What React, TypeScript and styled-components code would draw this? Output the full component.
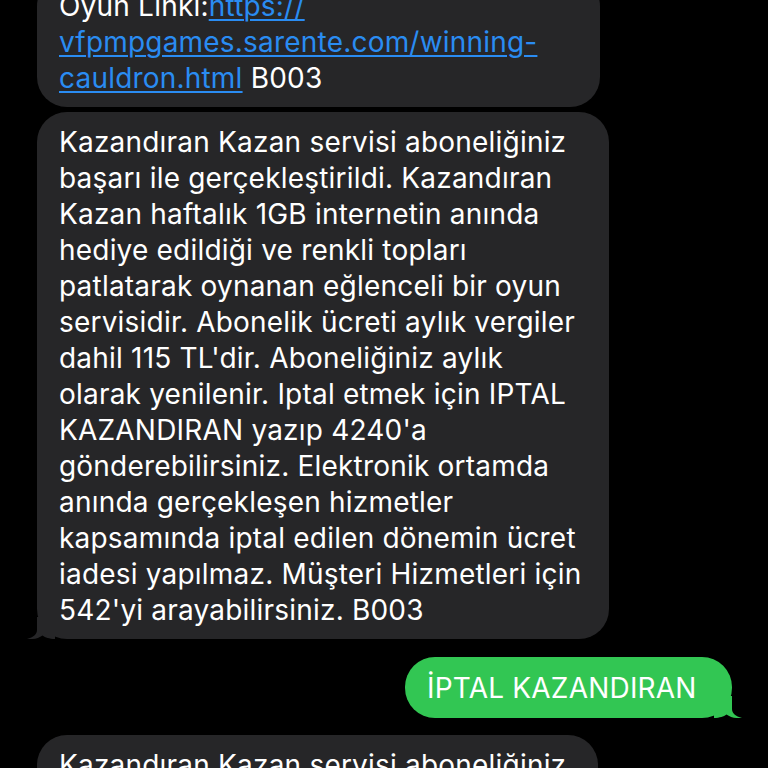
import React from 'react'
import styled, { createGlobalStyle } from 'styled-components'

const GlobalStyle = createGlobalStyle`
  html, body {
    margin: 0;
    padding: 0;
    background: #000;
  }
  body {
    width: 768px;
    height: 768px;
    overflow: hidden;
    font-family: 'Inter', 'Noto Sans', sans-serif;
  }
`

const Thread = styled.div`
  display: flex;
  flex-direction: column;
  padding: 0 36px 0 37px;
  margin-top: -24px;
`

const Row = styled.div<{ $mine?: boolean; $gap: number }>`
  display: flex;
  justify-content: ${(p) => (p.$mine ? 'flex-end' : 'flex-start')};
  margin-top: ${(p) => p.$gap}px;
`

const Bubble = styled.div<{ $mine?: boolean; $width: number }>`
  position: relative;
  box-sizing: border-box;
  width: ${(p) => p.$width}px;
  padding: ${(p) => (p.$mine ? '13px 22px 12px 22px' : '12px 22px 11px 22px')};
  border-radius: 30px;
  background: ${(p) => (p.$mine ? '#32c653' : '#262628')};
  color: #fff;
  font-size: 28px;
  line-height: 36px;
  letter-spacing: 0.2px;
  white-space: nowrap;
`

const Tail = styled.svg<{ $mine?: boolean }>`
  position: absolute;
  bottom: 0;
  width: 28px;
  height: 22px;
  ${(p) => (p.$mine ? 'right: -10px; transform: scaleX(-1);' : 'left: -10px;')}
`

const Link = styled.span`
  color: #2a8cf2;
  text-decoration: underline;
  text-decoration-thickness: 2px;
  text-underline-offset: 3px;
`

const BubbleTail = ({ mine, color }: { mine?: boolean; color: string }) => (
  <Tail $mine={mine} viewBox="0 0 28 22">
    <path
      d="M10 0 L10 13 C10 17 6.5 20.5 0 22 C6 22.6 11.5 21.2 15.5 18.4 C18.5 20.6 22 21.6 28 22 L28 0 Z"
      fill={color}
    />
  </Tail>
)

const lines = [
  'Kazandıran Kazan servisi aboneliğiniz',
  'başarı ile gerçekleştirildi. Kazandıran',
  'Kazan haftalık 1GB internetin anında',
  'hediye edildiği ve renkli topları',
  'patlatarak oynanan eğlenceli bir oyun',
  'servisidir. Abonelik ücreti aylık vergiler',
  "dahil 115 TL'dir. Aboneliğiniz aylık",
  'olarak yenilenir. Iptal etmek için IPTAL',
  "KAZANDIRAN yazıp 4240'a",
  'gönderebilirsiniz. Elektronik ortamda',
  'anında gerçekleşen hizmetler',
  'kapsamında iptal edilen dönemin ücret',
  'iadesi yapılmaz. Müşteri Hizmetleri için',
  "542'yi arayabilirsiniz. B003",
]

const Lines = ({ items }: { items: string[] }) => (
  <>
    {items.map((l, i) => (
      <div key={i}>{l}</div>
    ))}
  </>
)

export default function App() {
  return (
    <>
      <GlobalStyle />
      <Thread>
        <Row $gap={0}>
          <Bubble $width={563}>
            <div>
              Oyun Linki:<Link>https://</Link>
            </div>
            <div>
              <Link>vfpmpgames.sarente.com/winning-</Link>
            </div>
            <div>
              <Link>cauldron.html</Link> B003
            </div>
          </Bubble>
        </Row>
        <Row $gap={5}>
          <Bubble $width={572}>
            <Lines items={lines} />
            <BubbleTail color="#262628" />
          </Bubble>
        </Row>
        <Row $gap={18} $mine>
          <Bubble $width={327} $mine>
            <div>İPTAL KAZANDIRAN</div>
            <BubbleTail mine color="#32c653" />
          </Bubble>
        </Row>
        <Row $gap={17}>
          <Bubble $width={561}>
            <Lines items={lines.slice(0, 3)} />
          </Bubble>
        </Row>
      </Thread>
    </>
  )
}
